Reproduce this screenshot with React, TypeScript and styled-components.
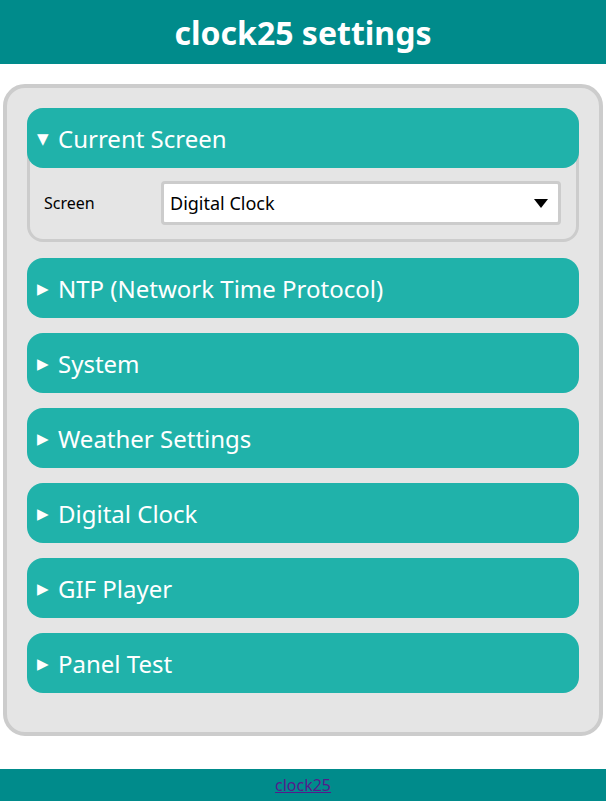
import React, { useState } from "react"
import styled, { createGlobalStyle } from "styled-components"

const GlobalStyle = createGlobalStyle`
	html, body {
		margin: 0;
		padding: 0;
		background: #ffffff;
		font-family: "Noto Sans", "DejaVu Sans", sans-serif;
	}
`

const sections = [
	"Current Screen",
	"NTP (Network Time Protocol)",
	"System",
	"Weather Settings",
	"Digital Clock",
	"GIF Player",
	"Panel Test",
]

const screens = ["Digital Clock", "GIF Player", "Panel Test"]

const App: React.FC = () => {
	const [openSection, setOpenSection] = useState<string | null>("Current Screen")
	const [screen, setScreen] = useState("Digital Clock")

	const toggle = (name: string): void => {
		setOpenSection(current => (current === name ? null : name))
	}

	return (
		<>
			<GlobalStyle />
			<Header>
				<Title>clock25 settings</Title>
			</Header>
			<Main>
				{sections.map(name => {
					const isOpen = openSection === name
					return (
						<Section key={name} $open={isOpen}>
							<SectionHead $open={isOpen} onClick={() => toggle(name)}>
								<Marker>{isOpen ? "▼" : "▶"}</Marker>
								{name}
							</SectionHead>
							{isOpen && name === "Current Screen" && (
								<SectionBody>
									<FieldLabel>Screen</FieldLabel>
									<SelectWrap>
										<Select value={screen} onChange={e => setScreen(e.target.value)}>
											{screens.map(s => (
												<option key={s}>{s}</option>
											))}
										</Select>
										<SelectArrow />
									</SelectWrap>
								</SectionBody>
							)}
						</Section>
					)
				})}
			</Main>
			<Footer>
				<FooterLink href="#">clock25</FooterLink>
			</Footer>
		</>
	)
}

const Header = styled.header`
	background-color: #008b8b;
	height: 64px;
	display: flex;
	align-items: center;
	justify-content: center;
`

const Title = styled.h1`
	margin: 0;
	color: #ffffff;
	font-size: 32px;
	font-weight: 700;
`

const Main = styled.main`
	margin: 20px 3px 33px;
	padding: 20px 20px 39px;
	border: 4px solid #cccccc;
	border-radius: 22px;
	background-color: #e5e5e5;
	display: flex;
	flex-direction: column;
	gap: 15px;
`

const Section = styled.section<{ $open: boolean }>`
	border: ${(p): string => (p.$open ? "3px solid #cccccc" : "none")};
	border-radius: 16px;
	margin-bottom: ${(p): string => (p.$open ? "1px" : "0")};
`

const SectionHead = styled.div<{ $open: boolean }>`
	margin: ${(p): string => (p.$open ? "-3px -3px 0" : "0")};
	height: 60px;
	display: flex;
	align-items: center;
	padding: 0 10px;
	border-radius: 16px;
	background-color: #20b2aa;
	color: #ffffff;
	font-size: 24px;
	cursor: pointer;
	user-select: none;
`

const Marker = styled.span`
	display: inline-block;
	width: 21px;
	font-size: 15px;
`

const SectionBody = styled.div`
	display: flex;
	align-items: center;
	padding: 13px 15px 14px 14px;
`

const FieldLabel = styled.label`
	width: 117px;
	font-size: 16px;
	color: #000000;
`

const SelectWrap = styled.div`
	position: relative;
	flex: 1;
`

const Select = styled.select`
	appearance: none;
	width: 100%;
	height: 44px;
	box-sizing: border-box;
	border: 3px solid #cccccc;
	border-radius: 4px;
	background: #ffffff;
	padding: 0 6px;
	font-family: "Noto Sans", "DejaVu Sans", sans-serif;
	font-size: 18px;
	color: #000000;
	outline: none;
`

const SelectArrow = styled.span`
	position: absolute;
	right: 13px;
	top: 18px;
	width: 0;
	height: 0;
	border-left: 7px solid transparent;
	border-right: 7px solid transparent;
	border-top: 9px solid #000000;
	pointer-events: none;
`

const Footer = styled.footer`
	background-color: #008b8b;
	height: 32px;
	display: flex;
	align-items: center;
	justify-content: center;
`

const FooterLink = styled.a`
	color: #551a8b;
	font-size: 16px;
`

export default App
